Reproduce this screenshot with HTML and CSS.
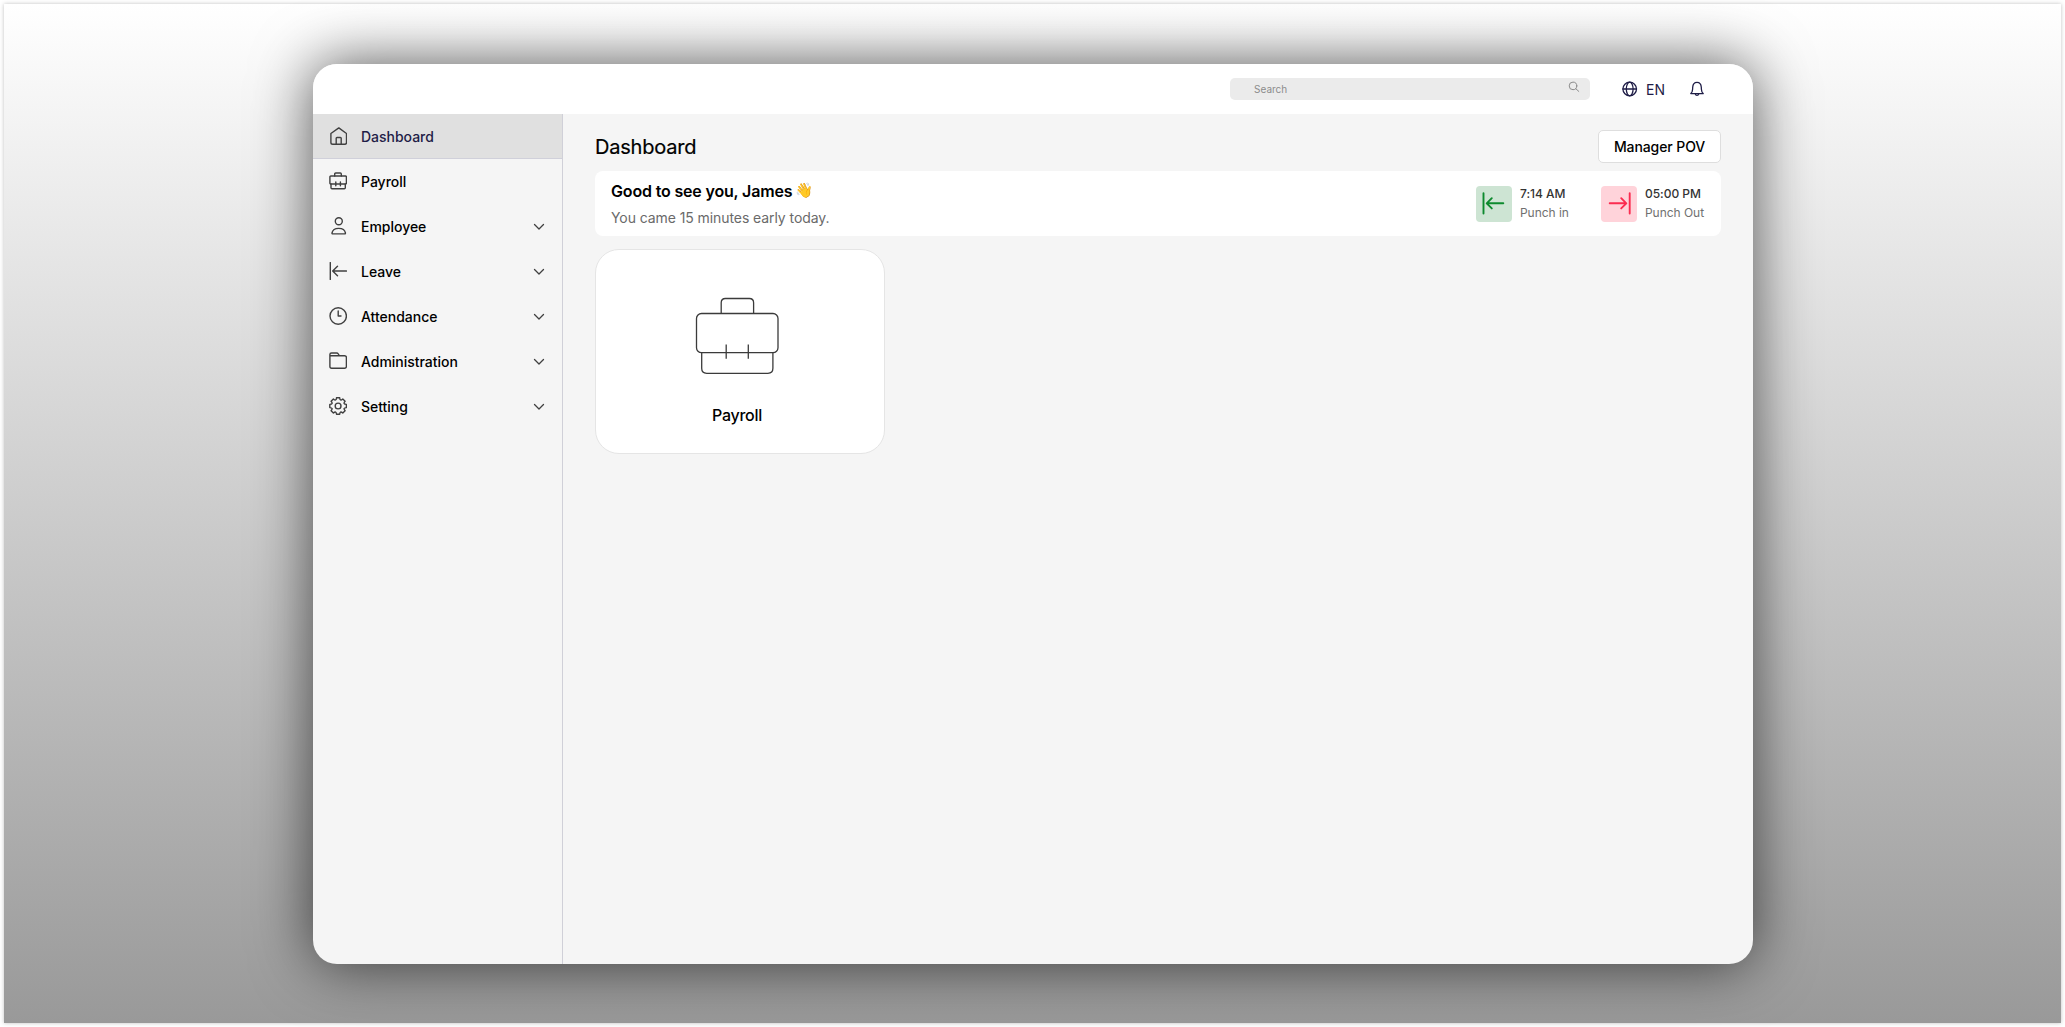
FILE: index.html
```html
<!DOCTYPE html>
<html lang="en">
<head>
<meta charset="utf-8">
<title>Dashboard</title>
<link rel="stylesheet" href="styles.css">
</head>
<body>
<div class="stage">
  <div class="app">
    <header class="topbar">
      <div class="search">
        <span class="search-label">Search</span>
        <svg class="search-icon" width="12" height="12" viewBox="0 0 12 12"><circle cx="5" cy="4.9" r="3.8"/><path d="M7.8 7.7 10.8 10.4"/></svg>
      </div>
      <div class="lang">
        <svg width="16" height="16" viewBox="0 0 16 16"><circle cx="7.700" cy="8" r="6.800"/><ellipse cx="7.700" cy="8" rx="3.4" ry="6.800"/><path d="M.9 8h13.600"/></svg>
        <span>EN</span>
      </div>
      <svg class="bell" width="16" height="16" viewBox="0 0 16 16"><path d="M1.8 12.6c1.2-1 1.7-2.3 1.8-4.4l.1-2C3.900 3.200 5.500 1.300 8 1.300s4.100 1.900 4.300 4.900l.1 2c.1 2.100.6 3.400 1.800 4.400z"/><path d="M6.300 12.900c.2 1 .9 1.500 1.700 1.500s1.500-.5 1.700-1.500"/></svg>
    </header>
    <div class="body">
      <nav class="sidebar">
        <a class="item active">
          <svg class="icon" width="18" height="18" viewBox="0 0 18 18"><path d="M1.9 6.500 9.800.9l7.700 5.600v9q0 1.800-1.800 1.800H3.700q-1.800 0-1.800-1.800z"/><path d="M7.200 17.300v-6q0-.8.8-.8h3.400q.8 0 .8.8v6"/></svg>
          <span class="label">Dashboard</span>
        </a>
        <a class="item">
          <svg class="icon" width="18" height="18" viewBox="0 0 18 18"><path d="M5.700 4V2q0-1 1-1h4.600q1 0 1 1v2"/><rect x=".9" y="4" width="16.500" height="8" rx="1"/><path d="M2 12v3.700q0 1 1 1h12.300q1 0 1-1V12M6.800 10v3.700M11.400 10v3.700"/></svg>
          <span class="label">Payroll</span>
        </a>
        <a class="item">
          <svg class="icon" width="18" height="18" viewBox="0 0 18 18"><circle cx="9.800" cy="4.200" r="3.500"/><path d="M3.600 16.900h12.200q.8 0 .6-.9c-.4-2.700-3-4.600-6.700-4.600S3.500 13.300 3 16q-.1.900.6.900z"/></svg>
          <span class="label">Employee</span>
          <svg class="chevron" width="12" height="8" viewBox="0 0 12 8"><path d="m1.500 1.500 4.500 4.500 4.500-4.500"/></svg>
        </a>
        <a class="item">
          <svg class="icon" width="18" height="18" viewBox="0 0 18 18"><path d="M1.300.6v16.900M17.400 9H4M8.500 4.200 3.700 9l4.800 4.800"/></svg>
          <span class="label">Leave</span>
          <svg class="chevron" width="12" height="8" viewBox="0 0 12 8"><path d="m1.500 1.500 4.500 4.500 4.500-4.500"/></svg>
        </a>
        <a class="item">
          <svg class="icon" width="18" height="18" viewBox="0 0 18 18"><circle cx="9.200" cy="9" r="8.200"/><path d="M9.200 4v5H12"/></svg>
          <span class="label">Attendance</span>
          <svg class="chevron" width="12" height="8" viewBox="0 0 12 8"><path d="m1.500 1.500 4.500 4.500 4.500-4.500"/></svg>
        </a>
        <a class="item">
          <svg class="icon" width="18" height="18" viewBox="0 0 18 18"><path d="M.9 4V2.600q0-1.600 1.600-1.600h5.200q1 0 1.600 1l1 1.700h5.300q1.800 0 1.800 1.800v8.900q0 1.800-1.800 1.800h-13q-1.700 0-1.700-1.800zM.9 3.800h10"/></svg>
          <span class="label">Administration</span>
          <svg class="chevron" width="12" height="8" viewBox="0 0 12 8"><path d="m1.500 1.500 4.500 4.500 4.500-4.500"/></svg>
        </a>
        <a class="item">
          <svg class="icon" width="18" height="18" viewBox="0 0 18 18"><g transform="translate(9.1 9)"><circle r="2.900"/><path d="M-1.600-8.300H1.600Q1.800-4.400 4.700-7L7-4.700Q4.400-1.800 8.300-1.600V1.600Q4.400 1.800 7 4.700L4.700 7Q1.800 4.400 1.600 8.300H-1.600Q-1.800 4.400-4.700 7L-7 4.700Q-4.400 1.800-8.300 1.600V-1.600Q-4.400-1.800-7-4.700L-4.700-7Q-1.800-4.400-1.600-8.300z"/></g></svg>
          <span class="label">Setting</span>
          <svg class="chevron" width="12" height="8" viewBox="0 0 12 8"><path d="m1.500 1.500 4.500 4.500 4.500-4.500"/></svg>
        </a>
      </nav>
      <main class="main">
        <div class="heading">
          <h1>Dashboard</h1>
          <button class="pov">Manager POV</button>
        </div>
        <section class="banner">
          <div class="greeting">
            <div class="hello"><span>Good to see you, James</span><span class="wave">👋</span></div>
            <div class="note">You came 15 minutes early today.</div>
          </div>
          <div class="punches">
            <div class="punch">
              <div class="badge in"><svg width="36" height="36" viewBox="0 0 36 36"><path d="M7.500 7.300v20.200M27.300 17.300H11M15.800 12.200l-5.100 5.100 5.100 5.100"/></svg></div>
              <div class="times"><div class="time">7:14 AM</div><div class="kind">Punch in</div></div>
            </div>
            <div class="punch">
              <div class="badge out"><svg width="36" height="36" viewBox="0 0 36 36"><path d="M28.700 7.300v20.200M8.700 17.300H25M20.200 12.200l5.100 5.100-5.100 5.100"/></svg></div>
              <div class="times out-times"><div class="time">05:00 PM</div><div class="kind">Punch Out</div></div>
            </div>
          </div>
        </section>
        <section class="card">
          <svg width="84" height="78" viewBox="0 0 84 78"><path d="M26.200 16.500V5.700q0-4.200 4.200-4.200h24q4.200 0 4.200 4.200v10.800"/><rect x="1.500" y="16.500" width="81.500" height="39.200" rx="5"/><path d="M6.700 55.700v15.600q0 5 5 5h61.200q5 0 5-5V55.700M31.200 47.500v14.300M53.300 47.500v14.300"/></svg>
          <div class="card-label">Payroll</div>
        </section>
      </main>
    </div>
  </div>
</div>
</body>
</html>
```
FILE: styles.css
```css
* { box-sizing: border-box; }
body {
  margin: 0;
  padding: 4px;
  height: 1027px;
  background: #fff;
  font-family: Inter, "Liberation Sans", sans-serif;
  font-size: 14px;
  color: #000;
  overflow: hidden;
}
svg { display: block; flex: none; fill: none; stroke-linecap: round; stroke-linejoin: round; }
.stage {
  height: 1019px;
  padding: 60px 308px 59px 309px;
  background: linear-gradient(#fff, #999);
  box-shadow: 0 0 4px rgba(0, 0, 0, 0.25);
}
.app {
  width: 1440px;
  height: 900px;
  display: flex;
  flex-direction: column;
  border-radius: 24px;
  background: #f5f5f5;
  box-shadow: 0 0 60px rgba(0, 0, 0, 0.66);
  overflow: hidden;
}
.topbar {
  height: 50px;
  flex: none;
  display: flex;
  align-items: center;
  justify-content: flex-end;
  padding-right: 48px;
  background: #fff;
  color: #1f1d47;
}
.topbar svg { stroke: #1f1d47; stroke-width: 1.3; }
.search {
  width: 360px;
  height: 22px;
  display: flex;
  align-items: center;
  justify-content: space-between;
  padding: 0 10px 0 24px;
  margin-right: 32px;
  border-radius: 5px;
  background: #ebebeb;
}
.search-label { font-size: 10px; line-height: 14px; color: #8b8b8b; }
.topbar .search-icon { stroke: #8b8b8b; stroke-width: 1; margin-bottom: 5px; }
.lang { display: flex; align-items: center; gap: 8px; margin-right: 24px; }
.lang span { line-height: 18px; padding-top: 2px; }
.body { flex: 1; display: flex; }
.sidebar { width: 250px; border-right: 1px solid #d0d0d8; }
.item {
  height: 45px;
  display: flex;
  align-items: center;
  padding: 0 17px 1px 16px;
  font-weight: 500;
}
.item.active { background: #e0e0e0; color: #1f1d47; border-bottom: 1px solid #d0d0da; padding-bottom: 0; }
.icon { stroke: #404040; stroke-width: 1.4; margin-right: 14px; }
.label { flex: 1; line-height: 20px; padding-top: 2px; letter-spacing: -0.02px; }
.chevron { stroke: #404040; stroke-width: 1.3; margin-top: 1px; }
.main { flex: 1; padding: 16px 32px; }
.heading { display: flex; align-items: center; justify-content: space-between; height: 33px; }
h1 { margin: 0; font-size: 20px; font-weight: 400; line-height: 28px; letter-spacing: -0.22px; -webkit-text-stroke: 0.2px #000; }
.pov {
  width: 123px;
  height: 33px;
  padding: 1px 0 0;
  border: 1px solid #dedede;
  border-radius: 5px;
  background: #fff;
  font: 500 14px/20px Inter, sans-serif;
  letter-spacing: -0.1px;
  color: #000;
}
.banner {
  height: 65px;
  margin-top: 8px;
  padding: 10px 16px;
  display: flex;
  justify-content: space-between;
  border-radius: 8px;
  background: #fff;
}
.hello { display: flex; align-items: center; gap: 3px; height: 20px; font-size: 16px; font-weight: 600; line-height: 20px; letter-spacing: -0.17px; }
.wave { font-family: "Noto Color Emoji", sans-serif; font-size: 14.5px; font-weight: 400; letter-spacing: 0; }
.note { margin-top: 7px; line-height: 20px; color: #6a6a6a; letter-spacing: -0.08px; }
.punches { display: flex; padding-top: 5px; }
.punch { display: flex; gap: 8px; }
.badge { width: 36px; height: 36px; border-radius: 4px; }
.badge svg { stroke-width: 1.9; }
.in { background: #cde4d3; stroke: #0d8a2e; }
.out { background: #ffd3da; stroke: #fb2c50; }
.times { width: 81px; white-space: nowrap; }
.out-times { width: 60px; }
.time { font-size: 12px; line-height: 16px; font-weight: 500; color: #333; letter-spacing: -0.03px; }
.kind { margin-top: 3px; font-size: 12px; line-height: 16px; color: #707070; letter-spacing: -0.04px; }
.card {
  width: 290px;
  height: 205px;
  margin-top: 13px;
  padding: 47px 6px 0 0;
  display: flex;
  flex-direction: column;
  align-items: center;
  border: 1px solid #e5e5e5;
  border-radius: 24px;
  background: #fff;
}
.card svg { stroke: #3b3b3b; stroke-width: 1.3; stroke-linecap: butt; }
.card-label { margin-top: 30px; font-size: 16px; line-height: 20px; font-weight: 500; letter-spacing: -0.25px; }
```
